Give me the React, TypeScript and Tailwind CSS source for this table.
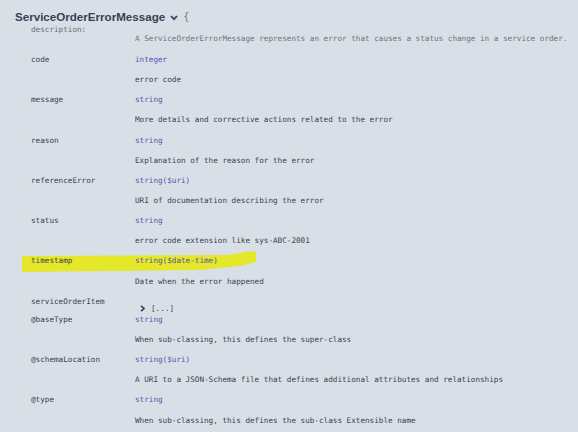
import React from "react";

const mono = { fontFamily: '"DejaVu Sans Mono", "Liberation Mono", monospace' };

type Prop = { key: string; type?: string; desc?: string; special?: boolean };

const props: Prop[] = [
  { key: "code", type: "integer", desc: "error code" },
  { key: "message", type: "string", desc: "More details and corrective actions related to the error" },
  { key: "reason", type: "string", desc: "Explanation of the reason for the error" },
  { key: "referenceError", type: "string($uri)", desc: "URI of documentation describing the error" },
  { key: "status", type: "string", desc: "error code extension like sys-ABC-2001" },
  { key: "timestamp", type: "string($date-time)", desc: "Date when the error happened" },
  { key: "serviceOrderItem", special: true },
  { key: "@baseType", type: "string", desc: "When sub-classing, this defines the super-class" },
  { key: "@schemaLocation", type: "string($uri)", desc: "A URI to a JSON-Schema file that defines additional attributes and relationships" },
  { key: "@type", type: "string", desc: "When sub-classing, this defines the sub-class Extensible name" },
];

export default function App() {
  return (
    <div className="relative w-[578px] h-[432px] overflow-hidden bg-[#d9dfe7]">
      <svg className="absolute left-0 top-0 pointer-events-none" width="578" height="432">
        <path
          d="M22 256 L228 255 L250 251 L256 252 L256 262 L240 266 L200 270 L22 272 Z"
          fill="#e4e72a"
        />
      </svg>
      <div className="relative pt-[9px]">
        <div
          className="pl-[15px] h-[16px] leading-[16px] flex items-center text-[11.6px] font-semibold text-[#3b4151]"
          style={{ fontFamily: '"Liberation Sans", Arial, sans-serif' }}
        >
          <span>ServiceOrderErrorMessage</span>
          <svg className="ml-[5px] mt-[2px]" width="8" height="6" viewBox="0 0 8 6">
            <path d="M1 1 L4 4.2 L7 1" stroke="#3b4151" strokeWidth="1.8" fill="none" />
          </svg>
          <span className="ml-[5px] font-normal text-[#777] text-[10px]" style={mono}>{"{"}</span>
        </div>
        <div className="pl-[31px] text-[7.65px]" style={mono}>
          <div className="grid grid-cols-[104px_1fr]">
            <div className="h-[10px] leading-[10px] text-[#6b6f78]">description:</div>
            <div className="pt-[9px] h-[19px] leading-[10px] text-[#6f737b]">
              A ServiceOrderErrorMessage represents an error that causes a status change in a service order.
            </div>
          </div>
          <div className="mt-[6px]">
            {props.map((p) =>
              p.special ? (
                <div key={p.key} className="grid grid-cols-[104px_1fr] h-[18.2px]">
                  <div className="h-[20.15px] leading-[20.15px] text-[#3b4151]">{p.key}</div>
                  <div className="pt-[12px] leading-[10px] flex items-center text-[#3b4151]">
                    <svg className="ml-[5px] mr-[6px]" width="5" height="7" viewBox="0 0 5 7">
                      <path d="M1 0.8 L4 3.5 L1 6.2" stroke="#3b4151" strokeWidth="1.6" fill="none" />
                    </svg>
                    <span>[...]</span>
                  </div>
                </div>
              ) : (
                <div key={p.key}>
                  <div className="grid grid-cols-[104px_1fr] h-[20.15px] leading-[20.15px]">
                    <div className="text-[#3b4151]">{p.key}</div>
                    <div className="text-[#55a]">{p.type}</div>
                  </div>
                  <div className="grid grid-cols-[104px_1fr] h-[20.15px] leading-[20.15px]">
                    <div />
                    <div className="text-[#3b4151]">{p.desc}</div>
                  </div>
                </div>
              )
            )}
          </div>
        </div>
      </div>
    </div>
  );
}
